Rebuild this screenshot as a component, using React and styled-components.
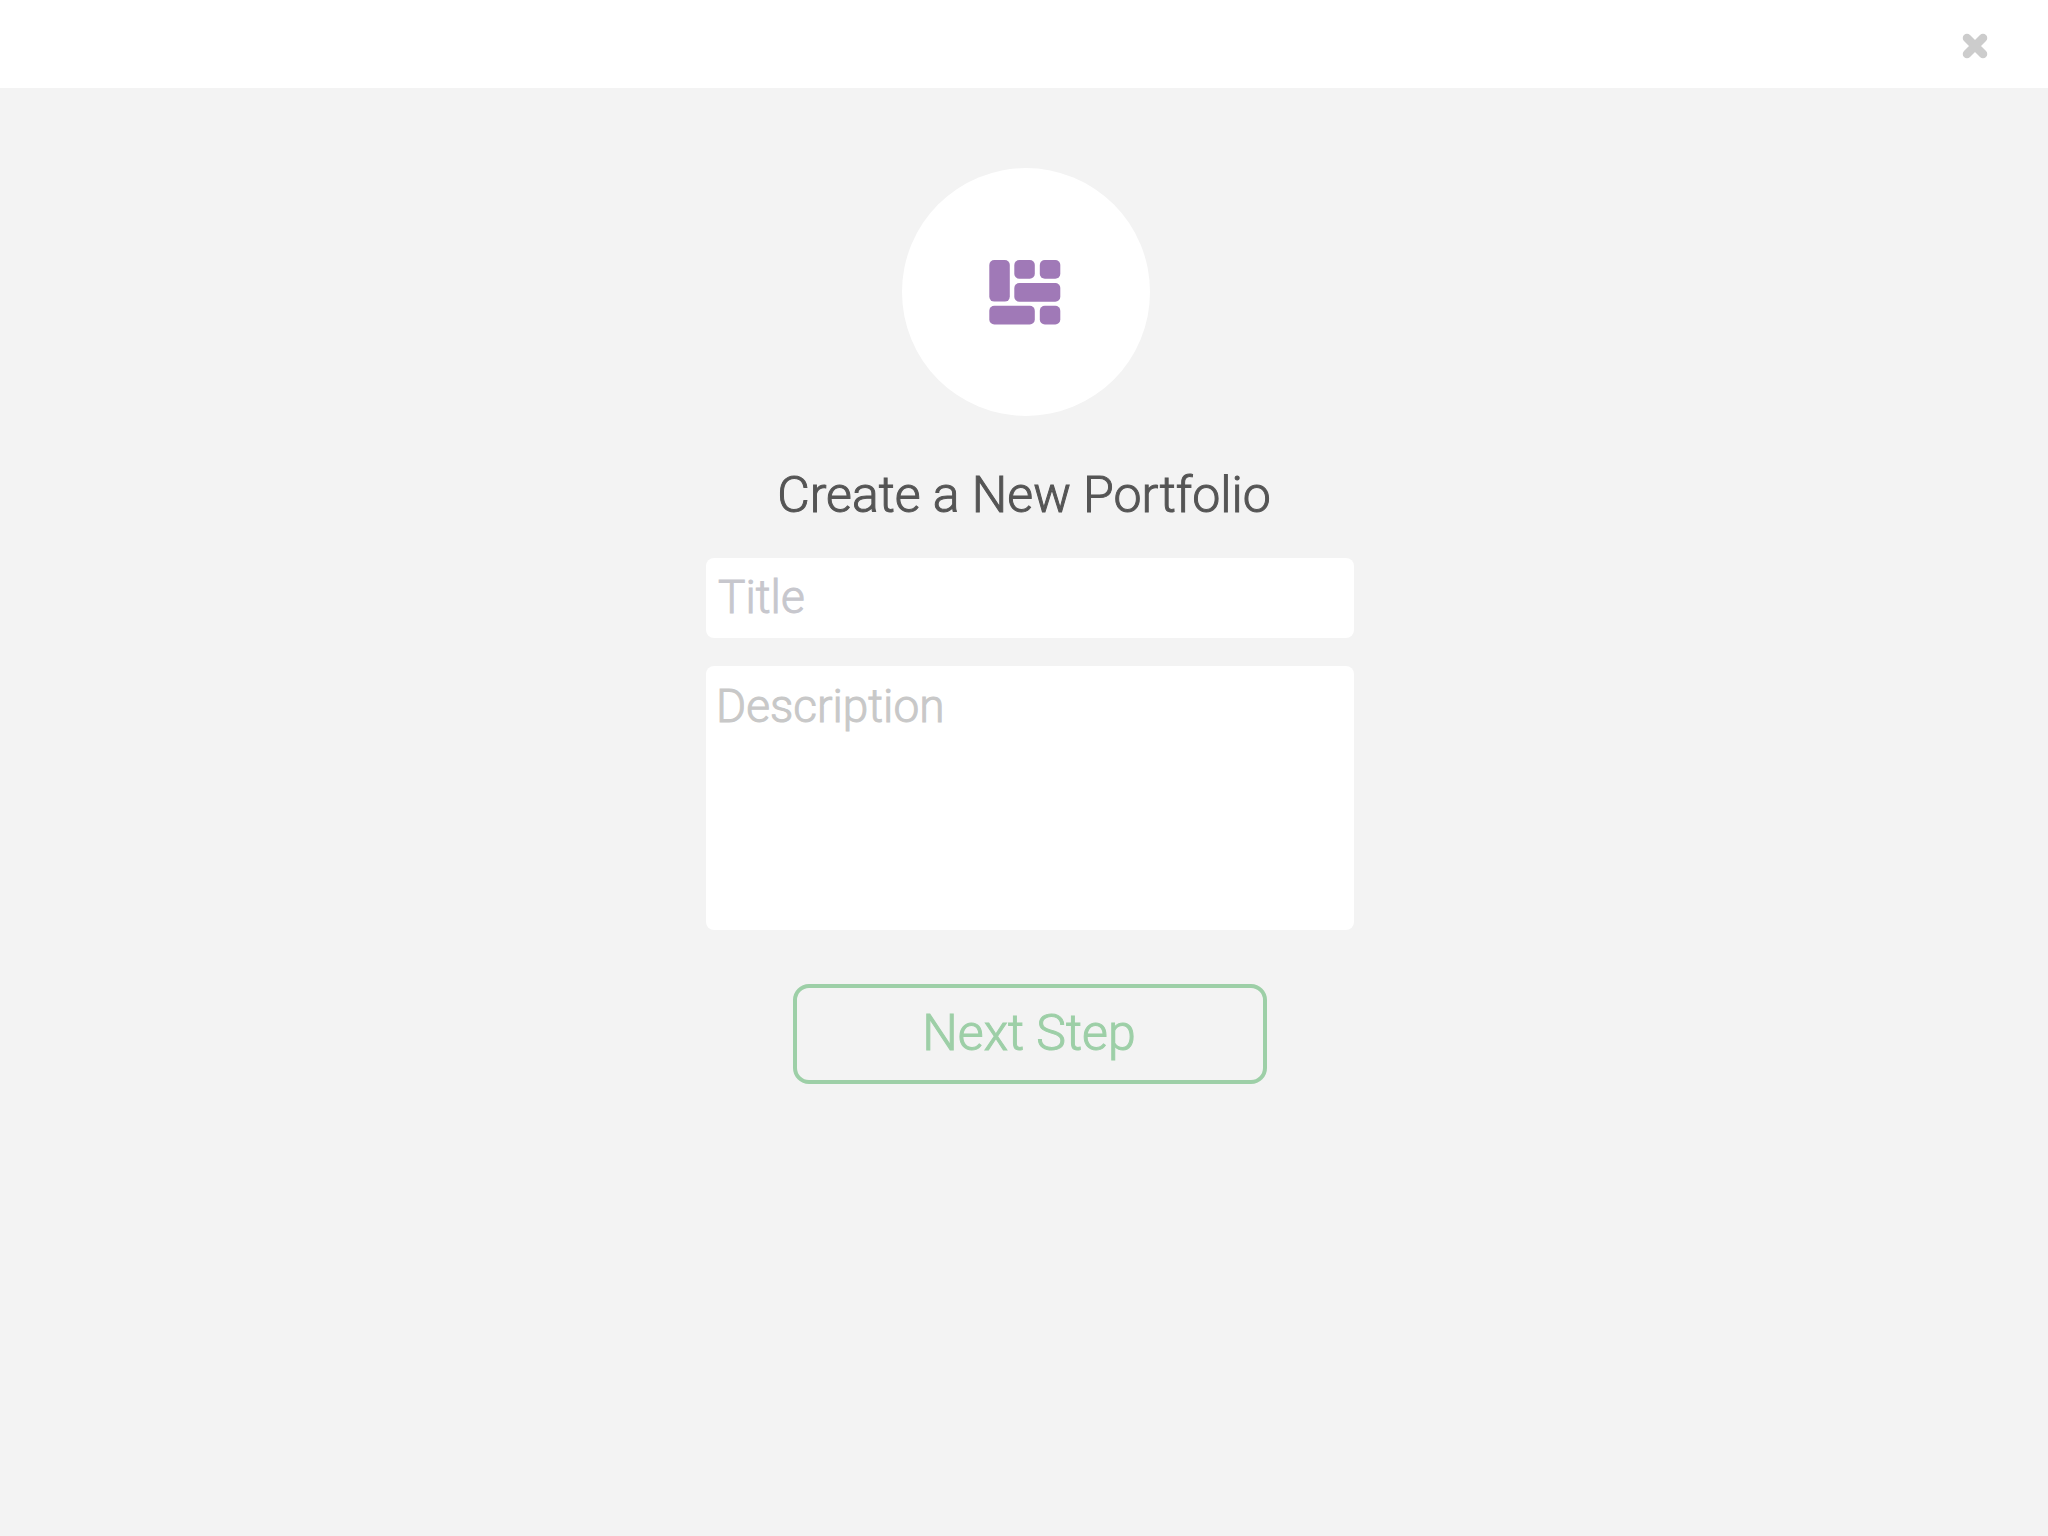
import React from "react";
import styled, { createGlobalStyle } from "styled-components";

const GlobalStyle = createGlobalStyle`
  *, *::before, *::after { box-sizing: border-box; }
  body {
    margin: 0;
    background: #f3f3f3;
    color: #555;
    font-family: Roboto, "Liberation Sans", sans-serif;
    font-weight: 300;
    -webkit-text-stroke: 1px currentColor;
  }
`;

const Page = styled.div`
  display: flex;
  flex-direction: column;
  min-height: 100vh;
`;

const TopBar = styled.header`
  display: flex;
  align-items: center;
  justify-content: flex-end;
  height: 88px;
  padding: 4px 52px 0;
  background: #fff;
`;

const CloseButton = styled.button`
  display: flex;
  padding: 8px;
  border: 0;
  background: none;
  color: #ccc;
  cursor: pointer;
`;

const Main = styled.main`
  display: flex;
  flex-direction: column;
  align-items: center;
  padding: 80px 24px;
`;

const Badge = styled.div`
  display: flex;
  align-items: center;
  justify-content: center;
  width: 248px;
  height: 248px;
  margin-left: 4px;
  border-radius: 50%;
  background: #fff;
`;

const Heading = styled.h1`
  margin: 48px 0 32px;
  font-size: 50px;
  font-weight: inherit;
  line-height: 62px;
  text-align: center;
`;

const Form = styled.form`
  display: flex;
  flex-direction: column;
  align-items: center;
  gap: 28px;
  width: 100%;
  max-width: 648px;
  margin-left: 12px;
`;

const Field = styled.label`
  display: flex;
  width: 100%;
`;

const fieldStyle = `
  width: 100%;
  border: 0;
  border-radius: 8px;
  background: #fff;
  color: #555;
  font: inherit;
  font-size: 46px;
  outline: none;
`;

const TextInput = styled.input`
  ${fieldStyle}
  height: 80px;
  padding: 0 12px 2px;
  &::placeholder {
    color: #c7c7cd;
    opacity: 1;
    -webkit-text-stroke: 1px #c7c7cd;
  }
`;

const TextArea = styled.textarea`
  ${fieldStyle}
  height: 264px;
  padding: 12px 10px;
  line-height: 56px;
  resize: none;
  &::placeholder {
    color: #c8c8c8;
    opacity: 1;
    -webkit-text-stroke: 1px #c8c8c8;
  }
`;

const NextButton = styled.button`
  width: 474px;
  max-width: 100%;
  height: 100px;
  margin-top: 26px;
  padding: 0 2px 2px 0;
  border: 4px solid #9dcfa7;
  border-radius: 16px;
  background: none;
  color: #9dcfa7;
  font: inherit;
  font-size: 50px;
  cursor: pointer;
  -webkit-text-stroke: 1px #9dcfa7;
`;

const CloseIcon = () => (
  <svg width="26" height="26" viewBox="0 0 26 26" aria-hidden="true">
    <path d="M5 5L21 21M21 5L5 21" stroke="currentColor" strokeWidth="8.5" strokeLinecap="round" />
  </svg>
);

const bricks = [
  [0.3, 0.6, 20.5, 41.5],
  [25.3, 0.6, 20.5, 18.7],
  [50.8, 0.6, 20.5, 18.7],
  [25.3, 23.5, 46, 18.7],
  [0.3, 46.3, 45.5, 18.7],
  [50.8, 46.3, 20.5, 18.7],
];

const PortfolioIcon = () => (
  <svg width="74" height="66" viewBox="0 0 74 66" fill="#a079b7" aria-hidden="true">
    {bricks.map(([x, y, width, height]) => (
      <rect key={`${x}-${y}`} x={x} y={y + 0.5} width={width} height={height} rx="5" />
    ))}
  </svg>
);

export default function App() {
  return (
    <Page>
      <GlobalStyle />
      <TopBar>
        <CloseButton type="button" aria-label="Close">
          <CloseIcon />
        </CloseButton>
      </TopBar>
      <Main>
        <Badge>
          <PortfolioIcon />
        </Badge>
        <Heading>Create a New Portfolio</Heading>
        <Form onSubmit={(e) => e.preventDefault()}>
          <Field>
            <TextInput type="text" name="title" aria-label="Title" placeholder="Title" />
          </Field>
          <Field>
            <TextArea name="description" aria-label="Description" placeholder="Description" />
          </Field>
          <NextButton type="submit">Next Step</NextButton>
        </Form>
      </Main>
    </Page>
  );
}
